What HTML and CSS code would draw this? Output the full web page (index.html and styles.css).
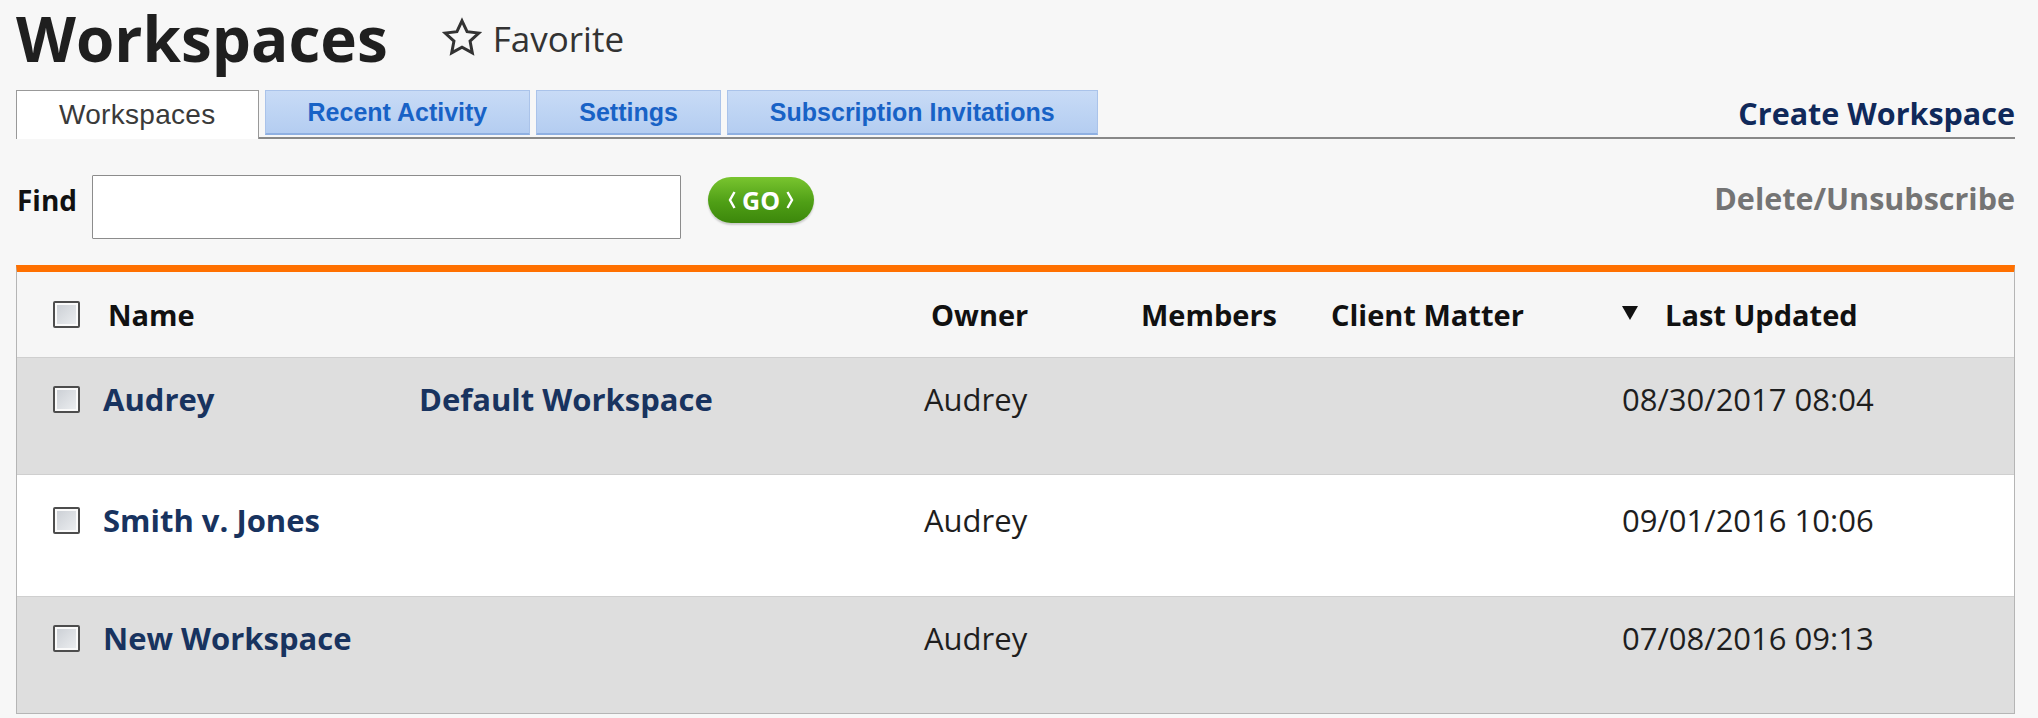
FILE: index.html
```html
<!DOCTYPE html>
<html>
<head>
<meta charset="utf-8">
<link rel="stylesheet" href="styles.css">
</head>
<body>
<div class="page">
  <header class="titlebar">
    <h1 class="title">Workspaces</h1>
    <a class="fav">
      <svg class="star" viewBox="0 0 24 24"><polygon points="12,2.2 14.9,8.4 21.6,9.2 16.6,13.8 17.9,20.5 12,17.2 6.1,20.5 7.4,13.8 2.4,9.2 9.1,8.4" fill="none" stroke="#333" stroke-width="1.7" stroke-linejoin="miter"/></svg>
      <span>Favorite</span>
    </a>
  </header>

  <nav class="tabbar">
    <div class="tabs">
      <span class="tab active">Workspaces</span>
      <span class="tab">Recent Activity</span>
      <span class="tab">Settings</span>
      <span class="tab">Subscription Invitations</span>
    </div>
    <a class="create">Create Workspace</a>
  </nav>

  <div class="findrow">
    <label class="findlabel">Find</label>
    <input class="findinput" type="text">
    <button class="go">
      <svg class="chev" viewBox="0 0 8 20"><polyline points="6.5,2 2,10 6.5,18" fill="none" stroke="#fff" stroke-width="2.4"/></svg>
      <span>GO</span>
      <svg class="chev" viewBox="0 0 8 20"><polyline points="1.5,2 6,10 1.5,18" fill="none" stroke="#fff" stroke-width="2.4"/></svg>
    </button>
    <a class="delete">Delete/Unsubscribe</a>
  </div>

  <div class="table">
    <div class="row head">
      <span class="cb"></span>
      <span class="h-name">Name</span>
      <span class="h-owner">Owner</span>
      <span>Members</span>
      <span>Client Matter</span>
      <span class="h-last"><i class="tri"></i>Last Updated</span>
    </div>
    <div class="row body alt">
      <span class="cellcb"><span class="cb"></span></span>
      <a class="link">Audrey</a>
      <a class="link">Default Workspace</a>
      <span class="txt">Audrey</span>
      <span></span>
      <span></span>
      <span class="txt">08/30/2017 08:04</span>
    </div>
    <div class="row body tall">
      <span class="cellcb"><span class="cb"></span></span>
      <a class="link">Smith v. Jones</a>
      <span></span>
      <span class="txt">Audrey</span>
      <span></span>
      <span></span>
      <span class="txt">09/01/2016 10:06</span>
    </div>
    <div class="row body alt">
      <span class="cellcb"><span class="cb"></span></span>
      <a class="link">New Workspace</a>
      <span></span>
      <span class="txt">Audrey</span>
      <span></span>
      <span></span>
      <span class="txt">07/08/2016 09:13</span>
    </div>
  </div>
</div>
</body>
</html>
```

FILE: styles.css
```css
html, body {
  margin: 0;
  background: #f7f7f7;
}
body {
  font-family: "Open Sans", "DejaVu Sans", sans-serif;
  color: #222;
}
.page {
  padding: 0 23px 0 16px;
}

/* title */
.titlebar {
  display: flex;
  align-items: center;
  height: 76px;
}
.title {
  margin: 0;
  font-size: 62px;
  line-height: 62px;
  font-weight: 700;
  color: #1f1f1f;
}
.fav {
  display: flex;
  align-items: center;
  margin-left: 53px;
  font-size: 35px;
  color: #333;
}
.star {
  width: 42px;
  height: 42px;
  margin-right: 10px;
}

/* tabs */
.tabbar {
  display: flex;
  justify-content: space-between;
  align-items: flex-end;
  height: 47px;
  margin-top: 14px;
  border-bottom: 2px solid #888;
}
.tabs {
  display: flex;
  align-items: flex-end;
  gap: 6px;
  height: 100%;
}
.tab {
  box-sizing: border-box;
  height: 45px;
  margin-bottom: 2px;
  padding: 0 42px;
  display: flex;
  align-items: center;
  justify-content: center;
  font-family: "Liberation Sans", Arial, sans-serif;
  font-weight: 700;
  font-size: 25px;
  color: #1862c6;
  background: linear-gradient(#c8dbf6, #b4cdf1);
  border: 1px solid #aac3ea;
  border-bottom: 2px solid #8fb0e2;
}
.tab.active {
  height: 49px;
  margin-bottom: -2px;
  background: #fff;
  border: 1px solid #999;
  border-bottom: none;
  font-weight: 400;
  font-size: 28px;
  letter-spacing: 0.3px;
  color: #3a3a3a;
}
.create {
  font-size: 30.5px;
  line-height: 30px;
  font-weight: 700;
  color: #10295a;
  margin-bottom: 9px;
}

/* find row */
.findrow {
  display: flex;
  align-items: center;
  margin-top: 22px;
}
.findlabel {
  font-size: 28px;
  font-weight: 700;
  color: #111;
  margin-left: 1px;
  margin-right: 15px;
}
.findinput {
  box-sizing: border-box;
  width: 589px;
  height: 64px;
  margin: 14px 0 0 0;
  border: 1px solid #8c8c8c;
  border-radius: 1px;
  background: #fff;
}
.go {
  margin-left: 27px;
  width: 106px;
  height: 46px;
  border: none;
  border-radius: 23px;
  background: linear-gradient(#79c52f, #4f9f16 55%, #3c870b);
  box-shadow: 0 2px 2px rgba(0, 0, 0, 0.18);
  color: #fff;
  font-family: "Open Sans", sans-serif;
  font-weight: 700;
  font-size: 25px;
  padding: 0;
  display: flex;
  align-items: center;
  justify-content: center;
  gap: 6px;
}
.chev {
  width: 8px;
  height: 22px;
}
.delete {
  margin-left: auto;
  margin-bottom: 4px;
  font-size: 30.5px;
  font-weight: 700;
  color: #747474;
}

/* table */
.table {
  margin-top: 26px;
  border-top: 7px solid #ff7000;
  border-left: 1px solid #b5b5b5;
  border-right: 1px solid #b5b5b5;
  border-bottom: 1px solid #b5b5b5;
}
.row {
  display: grid;
  grid-template-columns: 50px 316px 505px 217px 190px 291px 1fr;
  padding-left: 36px;
  box-sizing: border-box;
}
.row.head {
  height: 85px;
  align-items: center;
  background: #f6f6f6;
  font-size: 29px;
  font-weight: 700;
  color: #111;
}
.h-name {
  grid-column: span 2;
  padding-left: 5px;
}
.h-owner {
  padding-left: 7px;
}
.h-last {
  display: flex;
  align-items: center;
}
.tri {
  display: inline-block;
  width: 0;
  height: 0;
  border-left: 8px solid transparent;
  border-right: 8px solid transparent;
  border-top: 14px solid #111;
  margin-right: 27px;
  margin-top: -4px;
}
.row.body {
  height: 117px;
  padding-top: 21px;
  align-items: start;
  background: #fff;
  border-top: 1px solid #cfcfcf;
  font-size: 31px;
  line-height: 40px;
}
.row.body.tall {
  height: 122px;
  padding-top: 25px;
}
.row.body.alt {
  background: #dedede;
}
.cellcb {
  height: 40px;
  display: flex;
  align-items: center;
}
.cb {
  display: inline-block;
  box-sizing: border-box;
  width: 27px;
  height: 27px;
  border: 2px solid #4d4d4d;
  border-radius: 2px;
  background: linear-gradient(135deg, #c9cdd3, #eef0f2);
  box-shadow: inset 0 0 0 2px #fafafa;
}
.link {
  font-weight: 700;
  color: #18335f;
}
.txt {
  color: #1e1e1e;
}
```
